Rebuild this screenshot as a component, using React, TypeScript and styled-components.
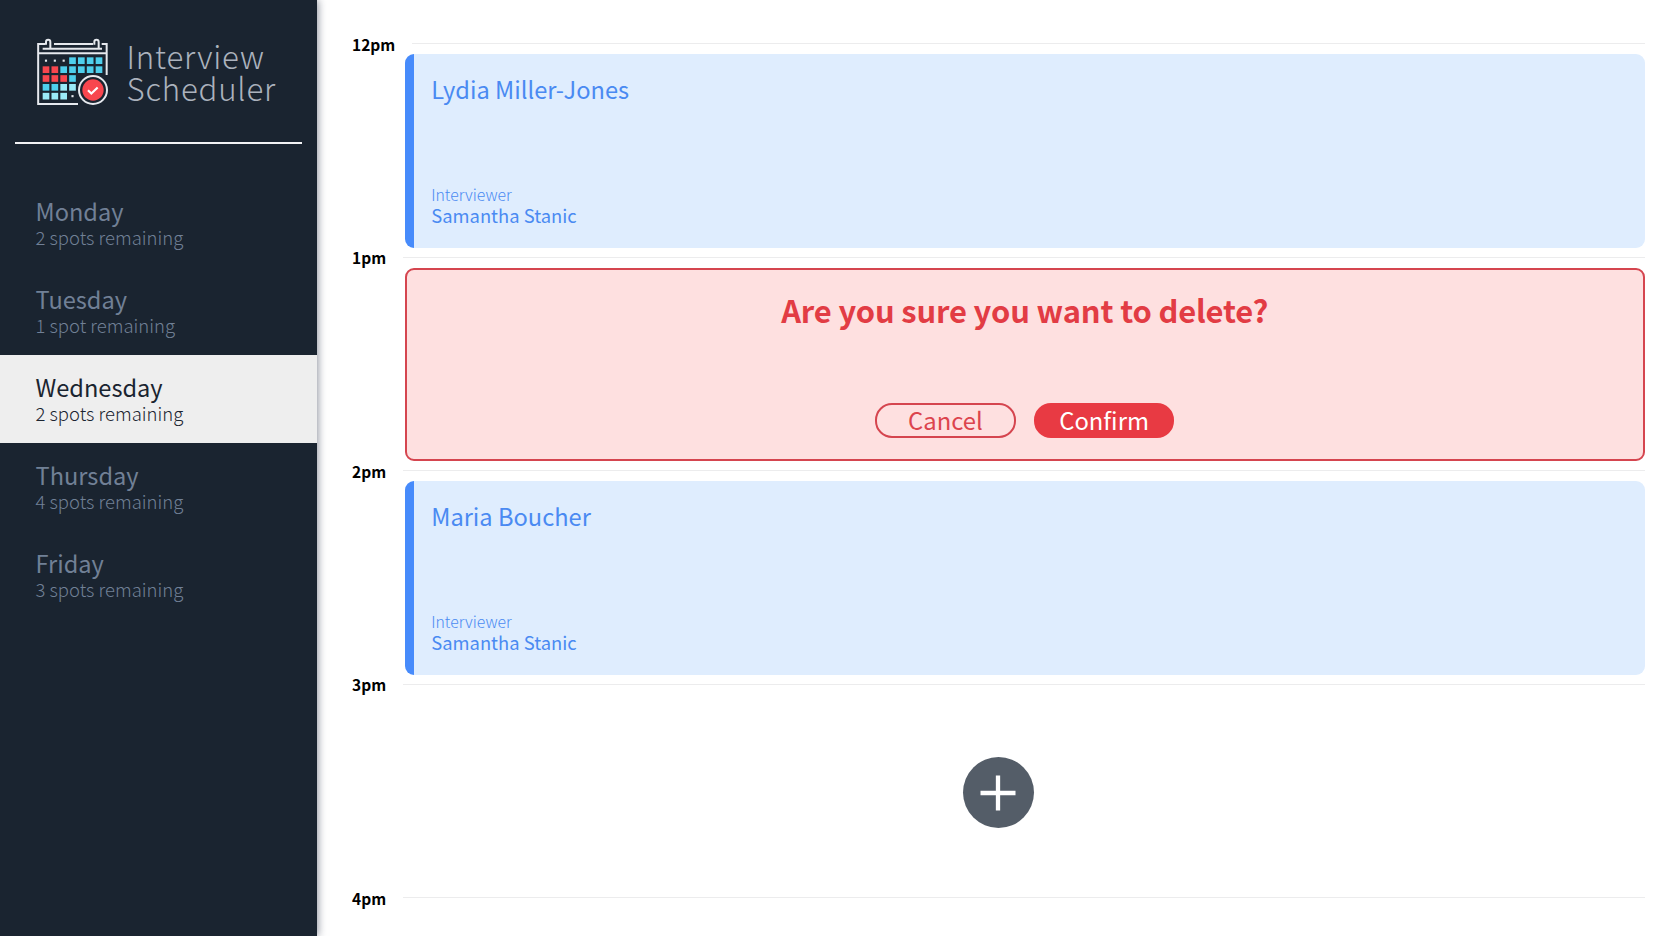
import React from 'react';
import styled, { createGlobalStyle } from 'styled-components';

const GlobalStyle = createGlobalStyle`
  *, *::before, *::after { box-sizing: border-box; }
  body {
    margin: 0;
    overflow: hidden;
    background: #fff;
    font-family: "Noto Sans CJK SC", "Noto Sans", sans-serif;
    -webkit-font-smoothing: antialiased;
  }
  h1, h2, h3, p, ul { margin: 0; padding: 0; font-weight: 400; }
  ul { list-style: none; }
  button { font: inherit; padding: 0; cursor: pointer; }
`;

const Layout = styled.div`
  display: flex;
  height: 936px;
`;

const Sidebar = styled.nav`
  display: flex;
  flex-direction: column;
  flex: none;
  width: 317px;
  background: #1a2430;
  box-shadow: 1px 0 8px rgba(27, 36, 60, 0.5);
`;

const Brand = styled.div`
  display: flex;
  align-items: flex-start;
  height: 142px;
  padding: 36px 0 0 35px;
`;

const BrandName = styled.h1`
  margin: 4px 0 0 16.5px;
  color: #abb2bd;
  font-weight: 300;
  font-size: 31.2px;
  line-height: 32px;
  letter-spacing: 0.8px;
`;

const Separator = styled.hr`
  width: 287px;
  height: 2px;
  margin: 0 0 35.6px 15px;
  border: 0;
  background: #f2f2f4;
`;

const DayItem = styled.li<{ $selected?: boolean }>`
  height: 87.9px;
  padding: 16.6px 0 0 35.5px;
  background: ${p => (p.$selected ? '#eeeeee' : 'transparent')};
  color: ${p => (p.$selected ? '#1a2430' : '#718096')};
`;

const DayName = styled.h2`
  font-size: 23.6px;
  line-height: 30px;
`;

const Spots = styled.h3`
  font-weight: 300;
  font-size: 18.5px;
  line-height: 23px;
`;

const Schedule = styled.main`
  flex: 1;
  min-width: 0;
  padding: 34.5px 35.5px 0 35px;
`;

const Slot = styled.article`
  height: 213.6px;
`;

const TimeRow = styled.header`
  display: flex;
  align-items: center;
  height: 18px;
  margin-bottom: 1.5px;
`;

const Time = styled.h2`
  margin-right: 16.5px;
  color: #000;
  font-weight: 700;
  font-size: 15.5px;
  line-height: 18px;
`;

const Rule = styled.hr`
  flex: 1;
  height: 1px;
  margin: 0;
  border: 0;
  background: #ececed;
`;

const Card = styled.section`
  display: flex;
  flex-direction: column;
  justify-content: space-between;
  height: 194px;
  margin-left: 53px;
  border-radius: 9px;
`;

const Appointment = styled(Card)`
  padding: 18px 18px 22.3px 17.2px;
  border-left: 9px solid #478bfb;
  background: #dfedfe;
  color: #4a8af2;
`;

const Student = styled.h2`
  font-size: 23.65px;
  line-height: 34px;
`;

const FieldLabel = styled.h3`
  font-weight: 300;
  font-size: 15.8px;
  line-height: 18px;
`;

const Interviewer = styled.p`
  font-size: 18.4px;
  line-height: 22px;
`;

const Confirmation = styled(Card)`
  align-items: center;
  height: 193.5px;
  padding: 20.6px 0 21.3px;
  border: 2px solid #d5454f;
  background: #fee0e0;
`;

const Question = styled.h1`
  color: #e23c44;
  font-weight: 700;
  font-size: 30.9px;
  line-height: 40px;
  letter-spacing: -0.15px;
`;

const Actions = styled.div`
  display: flex;
  gap: 18.5px;
`;

const Button = styled.button<{ $filled?: boolean }>`
  width: 140.2px;
  height: 34.6px;
  padding-bottom: 2px;
  border: 2px solid ${p => (p.$filled ? '#e83a43' : '#d5454f')};
  border-radius: 17px;
  background: ${p => (p.$filled ? '#e83a43' : 'transparent')};
  color: ${p => (p.$filled ? '#fff' : '#dc444d')};
  font-size: 23.8px;
  line-height: 28px;
`;

const EmptySlot = styled.section`
  display: flex;
  align-items: center;
  justify-content: center;
  height: 196px;
`;

const AddButton = styled.button`
  display: flex;
  align-items: center;
  justify-content: center;
  width: 71px;
  height: 71px;
  border: 0;
  border-radius: 50%;
  background: #545d68;
`;

function CalendarLogo() {
  const cyan = '#4ecfec';
  const red = '#f8464e';
  const light = '#9bebf8';
  const cols = [128, 154.5, 181, 207.5, 234, 260.5, 287];
  const rows = [112, 139, 165.5, 192, 218.5];
  const cells: (string | null)[][] = [
    [null, null, null, cyan, cyan, cyan, cyan],
    [red, red, cyan, cyan, cyan, cyan, cyan],
    [red, red, red, cyan],
    [cyan, cyan, light, light],
    [light, light, light],
  ];
  return (
    <svg width="75" height="71" viewBox="105 48 225 213" fill="none">
      <g stroke="#e6e9ee" strokeWidth="6">
        <path d="M136 72H114.500V252H234" />
        <path d="M162 72H279" />
        <path d="M305 72H320V165" />
        <path d="M128 86H306" />
        <path d="M114 99.500H320" />
        <path d="M138 74V66a6.500 6.500 0 0 1 13 0V86" />
        <path d="M283 74V66a6.500 6.500 0 0 1 13 0V86" />
        <circle cx="279" cy="210" r="42" />
      </g>
      {cells.map((row, r) =>
        row.map((fill, c) => fill && <rect key={`${r}-${c}`} x={cols[c]} y={rows[r]} width="20" height="20" fill={fill} />),
      )}
      {[[138, 122], [164.5, 122], [191, 122], [217.5, 228.5]].map(([x, y]) => (
        <rect key={`${x}-${y}`} x={x - 3.2} y={y - 3.2} width="6.4" height="6.4" fill="#e6e9ee" />
      ))}
      <circle cx="279" cy="210" r="32" fill={red} />
      <path d="M264 211l10 9.500 19-18" stroke="#fff" strokeWidth="6.5" />
    </svg>
  );
}

const days = [
  { name: 'Monday', spots: '2 spots remaining' },
  { name: 'Tuesday', spots: '1 spot remaining' },
  { name: 'Wednesday', spots: '2 spots remaining', selected: true },
  { name: 'Thursday', spots: '4 spots remaining' },
  { name: 'Friday', spots: '3 spots remaining' },
];

function TimeHeader({ time }: { time: string }) {
  return (
    <TimeRow>
      <Time>{time}</Time>
      <Rule />
    </TimeRow>
  );
}

function Booked({ student, interviewer }: { student: string; interviewer: string }) {
  return (
    <Appointment>
      <Student>{student}</Student>
      <div>
        <FieldLabel>Interviewer</FieldLabel>
        <Interviewer>{interviewer}</Interviewer>
      </div>
    </Appointment>
  );
}

export default function App() {
  return (
    <>
      <GlobalStyle />
      <Layout>
        <Sidebar>
          <Brand>
            <CalendarLogo />
            <BrandName>
              Interview
              <br />
              Scheduler
            </BrandName>
          </Brand>
          <Separator />
          <ul>
            {days.map(day => (
              <DayItem key={day.name} $selected={day.selected}>
                <DayName>{day.name}</DayName>
                <Spots>{day.spots}</Spots>
              </DayItem>
            ))}
          </ul>
        </Sidebar>
        <Schedule>
          <Slot>
            <TimeHeader time="12pm" />
            <Booked student="Lydia Miller-Jones" interviewer="Samantha Stanic" />
          </Slot>
          <Slot>
            <TimeHeader time="1pm" />
            <Confirmation>
              <Question>Are you sure you want to delete?</Question>
              <Actions>
                <Button>Cancel</Button>
                <Button $filled>Confirm</Button>
              </Actions>
            </Confirmation>
          </Slot>
          <Slot>
            <TimeHeader time="2pm" />
            <Booked student="Maria Boucher" interviewer="Samantha Stanic" />
          </Slot>
          <Slot>
            <TimeHeader time="3pm" />
            <EmptySlot>
              <AddButton aria-label="Add">
                <svg width="36" height="36" viewBox="0 0 36 36" stroke="#fff" strokeWidth="4.3">
                  <path d="M18 0.500V35.500M0.500 18H35.500" />
                </svg>
              </AddButton>
            </EmptySlot>
          </Slot>
          <TimeHeader time="4pm" />
        </Schedule>
      </Layout>
    </>
  );
}
